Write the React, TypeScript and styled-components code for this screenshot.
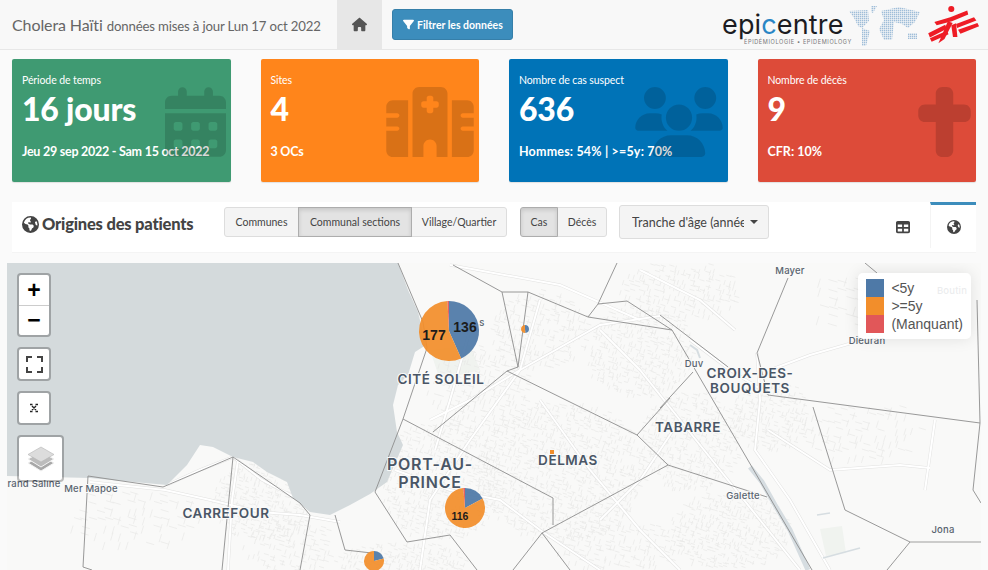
import styled, { createGlobalStyle } from "styled-components";
import type { ReactNode } from "react";
import {
  FaCalendarDays,
  FaCross,
  FaEarthAmericas,
  FaFilter,
  FaHospital,
  FaHouse,
  FaTable,
  FaUsers,
} from "react-icons/fa6";

const GlobalStyle = createGlobalStyle`
  html, body {
    margin: 0;
    height: 570px;
    overflow: hidden;
    background: #fafafa;
    font-family: "Lato", "Open Sans", sans-serif;
    color: #444;
  }
  * { box-sizing: border-box; }
`;

const Page = styled.div`
  display: flex;
  flex-direction: column;
  width: 988px;
  height: 570px;
  overflow: hidden;
`;

/* Top bar */
const NavBar = styled.header`
  display: flex;
  align-items: center;
  flex: none;
  height: 50px;
  background: #f8f8f8;
  border-bottom: 1px solid #e7e7e7;
`;

const Brand = styled.div`
  display: flex;
  align-items: baseline;
  gap: 4px;
  width: 337px;
  padding-left: 12px;
  color: #666;
  white-space: nowrap;
`;

const BrandTitle = styled.span`
  font-size: 16px;
  letter-spacing: -0.1px;
`;

const BrandDate = styled.span`
  font-size: 13.2px;
  letter-spacing: -0.16px;
`;

const HomeTab = styled.div`
  display: flex;
  align-items: center;
  justify-content: center;
  width: 45px;
  height: 49px;
  background: #e7e7e7;
  color: #555;
  font-size: 15px;
`;

const FilterButton = styled.button`
  display: flex;
  align-items: center;
  gap: 3px;
  height: 31px;
  width: 121px;
  margin-left: 10px;
  padding: 0 0 0 10px;
  border: 1px solid #367fa9;
  border-radius: 3px;
  background: #3c8dbc;
  color: #fff;
  font-family: inherit;
  font-size: 10.5px;
  font-weight: 700;
  white-space: nowrap;
`;

const Logos = styled.div`
  display: flex;
  align-items: center;
  margin-left: auto;
  height: 49px;
  padding-right: 8px;
`;

const EpicentreLogo = styled.div`
  display: flex;
  flex-direction: column;
  align-items: flex-start;
  width: 126px;
  margin-top: 8px;
`;

const EpicentreName = styled.span`
  font-family: "Inter", sans-serif;
  font-size: 27px;
  line-height: 25px;
  font-weight: 400;
  letter-spacing: 0.15px;
  color: #1c1c22;
  white-space: nowrap;
`;

const EpicentreBlue = styled.span`
  color: #2a86c5;
`;

const EpicentreTag = styled.span`
  margin: 2px 0 0 22px;
  font-family: "Inter", sans-serif;
  font-size: 5.6px;
  line-height: 7px;
  letter-spacing: 0.6px;
  color: #777;
  white-space: nowrap;
`;

/* Value boxes */
const ValueBoxRow = styled.section`
  display: grid;
  flex: none;
  grid-template-columns: repeat(4, 1fr);
  column-gap: 30px;
  padding: 9px 12px 0;
`;

const ValueBox = styled.div<{ $bg: string }>`
  position: relative;
  height: 123px;
  padding: 14px 10px 0;
  border-radius: 2px;
  background: ${(p) => p.$bg};
  color: #fff;
  box-shadow: 0 1px 1px rgba(0, 0, 0, 0.1);
  overflow: hidden;
`;

const ValueLabel = styled.div`
  font-size: 10.5px;
  line-height: 14px;
  letter-spacing: -0.1px;
`;

const ValueNumber = styled.div`
  margin-top: 2px;
  font-size: 32px;
  line-height: 40px;
  font-weight: 900;
  letter-spacing: -0.2px;
`;

const ValueNote = styled.div<{ $spacing: number }>`
  margin-top: 14px;
  font-size: 12.5px;
  line-height: 18px;
  font-weight: 700;
  letter-spacing: ${(p) => p.$spacing}px;
  white-space: nowrap;
`;

const ValueIcon = styled.div<{ $width: number }>`
  position: absolute;
  top: 28px;
  right: 5px;
  display: flex;
  color: rgba(0, 0, 0, 0.15);
  svg {
    width: ${(p) => p.$width}px;
    height: 70px;
  }
`;

/* Map section */
const MapHeader = styled.section`
  display: flex;
  flex: none;
  align-items: flex-start;
  height: 51px;
  margin: 20px 12px 0;
  background: #fff;
  border-bottom: 1px solid #f4f4f4;
`;

const MapTitle = styled.h2`
  display: flex;
  align-items: center;
  gap: 3px;
  width: 212px;
  margin: 12px 0 0;
  padding-left: 10px;
  font-size: 16.5px;
  font-weight: 900;
  letter-spacing: -0.2px;
  color: #444;
  white-space: nowrap;
`;

const ButtonGroup = styled.div<{ $gap: number }>`
  display: flex;
  margin: 5px ${(p) => p.$gap}px 0 0;
`;

const ToggleButton = styled.div<{ $active?: boolean; $width: number }>`
  display: flex;
  align-items: center;
  justify-content: center;
  width: ${(p) => p.$width}px;
  height: 30px;
  margin-left: -1px;
  border: 1px solid ${(p) => (p.$active ? "#adadad" : "#ddd")};
  background: ${(p) => (p.$active ? "#e3e3e3" : "#f4f4f4")};
  box-shadow: ${(p) => (p.$active ? "inset 0 2px 4px rgba(0,0,0,.13)" : "none")};
  color: #444;
  font-size: 10.5px;
  white-space: nowrap;
  position: relative;
  z-index: ${(p) => (p.$active ? 1 : 0)};
  &:first-child {
    margin-left: 0;
    border-radius: 3px 0 0 3px;
  }
  &:last-child {
    border-radius: 0 3px 3px 0;
  }
`;

const AgeDropdown = styled.div`
  display: flex;
  align-items: center;
  width: 150px;
  height: 34px;
  margin-top: 3px;
  padding-left: 12px;
  border: 1px solid #ddd;
  border-radius: 3px;
  background: #f4f4f4;
  color: #444;
  font-size: 12.5px;
  white-space: nowrap;
`;

const AgeText = styled.span`
  width: 112px;
  overflow: hidden;
`;

const Caret = styled.span`
  margin-left: 6px;
  border-top: 4px solid #444;
  border-left: 4px solid transparent;
  border-right: 4px solid transparent;
`;

const MapTabs = styled.div`
  display: flex;
  margin-left: auto;
`;

const MapTab = styled.div<{ $active?: boolean }>`
  display: flex;
  align-items: center;
  justify-content: center;
  width: 46px;
  height: 46px;
  padding: ${(p) => (p.$active ? "1px 0 0" : "1px 10px 0 0")};
  color: #444;
  font-size: 14px;
  border-top: 3px solid ${(p) => (p.$active ? "#3c8dbc" : "transparent")};
  border-left: 1px solid ${(p) => (p.$active ? "#f4f4f4" : "transparent")};
`;

const MapFrame = styled.div`
  position: relative;
  flex: 1;
  margin: 10px 7px 0;
  overflow: hidden;
  background: #f9f9f8;
`;

const MapSvg = styled.svg`
  display: block;
`;

const MapControls = styled.div`
  position: absolute;
  top: 10px;
  left: 10px;
  display: flex;
  flex-direction: column;
  align-items: flex-start;
  gap: 10px;
`;

const ControlBox = styled.div<{ $size?: number }>`
  display: flex;
  flex-direction: column;
  align-items: center;
  justify-content: center;
  width: ${(p) => p.$size ?? 34}px;
  min-height: ${(p) => p.$size ?? 34}px;
  border: 2px solid rgba(0, 0, 0, 0.25);
  border-radius: 4px;
  background: #fff;
  background-clip: padding-box;
`;

const ZoomButton = styled.div`
  display: flex;
  align-items: center;
  justify-content: center;
  width: 30px;
  height: 30px;
  font-family: "Liberation Sans", sans-serif;
  font-size: 23px;
  font-weight: 700;
  color: #000;
  & + & {
    border-top: 1px solid #ccc;
  }
`;

const Legend = styled.div`
  position: absolute;
  top: 10px;
  right: 10px;
  display: grid;
  grid-template-columns: 18px auto;
  column-gap: 7px;
  padding: 6px 8px;
  border-radius: 5px;
  background: rgba(255, 255, 255, 0.88);
  box-shadow: 0 0 15px rgba(0, 0, 0, 0.1);
  font-family: "Liberation Sans", Arial, sans-serif;
  font-size: 14px;
  line-height: 18px;
  color: #555;
`;

const Swatch = styled.i<{ $color: string }>`
  display: block;
  width: 18px;
  height: 18px;
  background: ${(p) => p.$color};
`;

const BLUE = "#4e79a7";
const ORANGE = "#f28e2b";
const RED = "#e15759";

/* Map geometry below is in page pixels, the viewBox takes care of the offset */
const COAST =
  "7,263 398,263 408,290 418,312 426,345 415,352 408,375 398,385 393,405 397,432 403,445 387,482 370,494 350,505 330,515 310,512 293,498 287,482 267,472 253,462 233,457 213,447 200,445 187,465 167,485 90,478 7,476";

const BOUNDARIES = [
  "453,265 502,292 528,292 588,317 672,330",
  "502,292 518,367 528,292",
  "518,367 507,371 433,432",
  "507,371 637,435 670,398",
  "637,435 668,465 542,533 513,570",
  "542,533 570,570",
  "553,525 553,498 403,419",
  "398,263 423,322 427,348 403,419 375,492 407,542 450,535 477,570",
  "617,263 598,304 588,317",
  "598,304 627,301 672,330",
  "672,330 812,570",
  "693,372 660,408",
  "668,465 767,497",
  "788,278 757,353 768,395 980,423",
  "813,407 845,510 910,542 887,570",
  "865,263 877,273",
  "977,300 980,423 973,490 981,503",
  "660,315 728,367",
  "88,476 163,487 233,457 300,503 310,515 300,570",
  "88,476 83,567",
  "233,457 222,570",
  "83,567 92,570",
  "335,515 345,550 372,553",
];

const MAIN_ROADS = [
  "167,485 200,470 233,457 262,480 300,500",
  "90,482 165,490 210,500 260,512 300,515 340,522",
  "238,460 232,500 228,570",
  "430,420 470,400 520,370 600,325 660,316",
  "395,470 450,490 500,500 540,530 600,570",
  "520,370 470,440 430,500 420,570",
  "600,330 640,370 680,420 720,470 760,520 800,570",
  "757,353 760,400 755,450 790,500 830,570",
  "768,430 830,470 900,465 930,468",
  "880,335 810,355 770,370",
  "935,420 925,490",
  "450,265 560,285 640,320",
  "640,270 700,300 735,330",
  "690,340 730,370 770,395",
  "540,400 590,470 640,530 680,570",
  "470,330 450,400 435,450",
  "540,300 520,370",
  "680,420 640,480 600,520",
];

/* Deterministic scribble for the dense street grid in the built up areas */
function streetGrid(cx: number, cy: number, w: number, h: number, step: number, seed: number) {
  let d = "";
  let s = seed;
  const next = () => {
    s = (s * 9301 + 49297) % 233280;
    return s / 233280;
  };
  for (let x = cx - w / 2; x < cx + w / 2; x += step) {
    for (let y = cy - h / 2; y < cy + h / 2; y += step) {
      const dx = (x - cx) / (w / 2);
      const dy = (y - cy) / (h / 2);
      if (dx * dx + dy * dy > 1 || next() < 0.2) continue;
      const jx = next() * 3 - 1.5;
      const jy = next() * 3 - 1.5;
      d +=
        next() > 0.5
          ? `M${(x + jx).toFixed(1)} ${(y + jy).toFixed(1)}l${step} ${(step * 0.3).toFixed(1)}`
          : `M${(x + jx).toFixed(1)} ${(y + jy).toFixed(1)}l${(-step * 0.3).toFixed(1)} ${step}`;
    }
  }
  return d;
}

const STREET_AREAS: [number, number, number, number, number, number][] = [
  [262, 500, 100, 80, 4, 11],
  [135, 515, 140, 60, 8, 23],
  [440, 480, 120, 120, 4, 37],
  [560, 470, 170, 140, 4, 41],
  [480, 390, 100, 90, 5, 53],
  [540, 330, 100, 80, 5, 61],
  [640, 350, 110, 90, 4, 71],
  [690, 440, 100, 100, 4, 83],
  [770, 415, 80, 70, 4, 97],
  [860, 430, 120, 60, 7, 101],
  [730, 530, 120, 80, 4, 113],
  [680, 290, 120, 60, 5, 127],
  [400, 560, 130, 40, 4, 131],
  [290, 545, 90, 60, 5, 137],
  [620, 545, 130, 50, 5, 149],
  [840, 300, 60, 60, 9, 157],
];

const STREETS = STREET_AREAS.map((a) => streetGrid(...a)).join("");

const GREEN_AREAS = ["820,529 842,526 846,553 826,556", "430,350 470,345 480,370 440,380"];

const RIVERS = [
  { points: "750,467 762,482 775,505 790,530 808,570", width: 5 },
  { points: "690,345 697,350 700,358", width: 2 },
  { points: "817,515 830,513", width: 1.5 },
  { points: "823,558 860,548", width: 1.5 },
];

const PLACES = [
  { x: 441, y: 384, size: 13.5, spacing: 0.6, text: "CITÉ SOLEIL" },
  { x: 430, y: 470, size: 16, spacing: 0.75, text: "PORT-AU-" },
  { x: 430, y: 488, size: 16, spacing: 0.75, text: "PRINCE" },
  { x: 568, y: 465, size: 13.5, spacing: 0.55, text: "DELMAS" },
  { x: 688, y: 432, size: 13.5, spacing: 0.55, text: "TABARRE" },
  { x: 750, y: 378, size: 13.5, spacing: 0.55, text: "CROIX-DES-" },
  { x: 750, y: 393, size: 13.5, spacing: 0.55, text: "BOUQUETS" },
  { x: 226, y: 518, size: 13.5, spacing: 0.55, text: "CARREFOUR" },
];

const TOWNS = [
  { x: 91, y: 492, text: "Mer Mapoe" },
  { x: 34, y: 487, text: "rand Saline" },
  { x: 790, y: 274, text: "Mayer" },
  { x: 867, y: 344, text: "Dieuran" },
  { x: 694, y: 367, text: "Duv" },
  { x: 743, y: 499, text: "Galette" },
  { x: 943, y: 533, text: "Jona" },
  { x: 952, y: 294, text: "Boutin" },
  { x: 482, y: 326, text: "s" },
];

type Slice = { color: string; from: number; to: number };

function slicePath(cx: number, cy: number, r: number, from: number, to: number) {
  const a = ((from - 90) * Math.PI) / 180;
  const b = ((to - 90) * Math.PI) / 180;
  const large = to - from > 180 ? 1 : 0;
  return `M${cx} ${cy}L${cx + r * Math.cos(a)} ${cy + r * Math.sin(a)}A${r} ${r} 0 ${large} 1 ${
    cx + r * Math.cos(b)
  } ${cy + r * Math.sin(b)}Z`;
}

const PIES: { cx: number; cy: number; r: number; slices: Slice[] }[] = [
  {
    cx: 449,
    cy: 331,
    r: 30,
    slices: [
      { color: BLUE, from: 0, to: 156 },
      { color: ORANGE, from: 156, to: 357 },
      { color: RED, from: 357, to: 360 },
    ],
  },
  {
    cx: 525,
    cy: 329,
    r: 4,
    slices: [
      { color: BLUE, from: 0, to: 175 },
      { color: ORANGE, from: 175, to: 360 },
    ],
  },
  {
    cx: 465,
    cy: 508,
    r: 20,
    slices: [
      { color: BLUE, from: 0, to: 62 },
      { color: ORANGE, from: 62, to: 355 },
      { color: RED, from: 355, to: 360 },
    ],
  },
  {
    cx: 374,
    cy: 561,
    r: 10,
    slices: [
      { color: BLUE, from: 0, to: 75 },
      { color: ORANGE, from: 75, to: 360 },
    ],
  },
];

const PIE_LABELS = [
  { x: 465, y: 332, size: 14, text: "136" },
  { x: 434, y: 340, size: 14, text: "177" },
  { x: 460, y: 520, size: 10.5, text: "116" },
];

function CityMap() {
  return (
    <MapSvg width={974} height={307} viewBox="7 263 974 307">
      <rect x={7} y={263} width={974} height={307} fill="#f9f9f8" />
      {GREEN_AREAS.map((p) => (
        <polygon key={p} points={p} fill="#f0f3ef" />
      ))}
      <path d={STREETS} fill="none" stroke="#e8e8e7" strokeWidth={0.7} />
      {MAIN_ROADS.map((p) => (
        <polyline key={p} points={p} fill="none" stroke="#e2e2e1" strokeWidth={3} />
      ))}
      {MAIN_ROADS.map((p) => (
        <polyline key={`w${p}`} points={p} fill="none" stroke="#fff" strokeWidth={2} />
      ))}
      {RIVERS.map((r) => (
        <polyline key={r.points} points={r.points} fill="none" stroke="#d6dde1" strokeWidth={r.width} />
      ))}
      <polygon points={COAST} fill="#d4dadc" />
      {BOUNDARIES.map((p) => (
        <polyline key={p} points={p} fill="none" stroke="#8d8d8d" strokeWidth={0.9} />
      ))}
      <polyline points="910,542 981,542" fill="none" stroke="#bdbdbd" strokeWidth={1.5} />
      {PLACES.map((p) => (
        <text
          key={p.text}
          x={p.x}
          y={p.y}
          textAnchor="middle"
          fontFamily="Inter, sans-serif"
          fontWeight={600}
          fontSize={p.size}
          letterSpacing={p.spacing}
          fill="#4a5666"
          stroke="#f9f9f8"
          strokeWidth={2}
          paintOrder="stroke"
        >
          {p.text}
        </text>
      ))}
      {TOWNS.map((t) => (
        <text
          key={t.text}
          x={t.x}
          y={t.y}
          textAnchor="middle"
          fontFamily="Inter, sans-serif"
          fontWeight={500}
          fontSize={9.5}
          letterSpacing={0.2}
          fill="#58636f"
          stroke="#f9f9f8"
          strokeWidth={2}
          paintOrder="stroke"
        >
          {t.text}
        </text>
      ))}
      <rect x={550} y={450} width={4} height={4} fill={ORANGE} />
      {PIES.map((pie) =>
        pie.slices.map((s) => (
          <path
            key={`${pie.cx}${s.color}`}
            d={slicePath(pie.cx, pie.cy, pie.r, s.from, s.to)}
            fill={s.color}
            fillOpacity={0.93}
          />
        ))
      )}
      {PIE_LABELS.map((l) => (
        <text
          key={l.text}
          x={l.x}
          y={l.y}
          textAnchor="middle"
          fontFamily="Liberation Sans, sans-serif"
          fontWeight={700}
          fontSize={l.size}
          fill="#1c1c1c"
        >
          {l.text}
        </text>
      ))}
    </MapSvg>
  );
}

function WorldDots() {
  return (
    <svg width={80} height={46} viewBox="0 0 80 46">
      <defs>
        <pattern id="dots" width={2} height={2} patternUnits="userSpaceOnUse">
          <rect width={1.4} height={1.4} fill="#9fbdd8" />
        </pattern>
      </defs>
      <g fill="url(#dots)">
        <polygon points="1,9 20,8 21,19 14,26 10,24 6,16" />
        <polygon points="14,26 22,29 18,44 14,44" />
        <polygon points="23,4 29,4 25,11 23,10" />
        <polygon points="33,9 51,5 72,10 67,20 60,26 54,22 46,20 44,38 36,38 31,27 36,18" />
        <polygon points="60,31 69,31 69,37 60,37" />
      </g>
    </svg>
  );
}

function MsfLogo() {
  return (
    <svg width={52} height={39} viewBox="30 12 152 115">
      <g fill="#ee1c25">
        <circle cx={98} cy={24} r={9} />
        <polygon points="48,62 95,48 145,28 148,40 100,60 55,72" />
        <polygon points="112,68 165,48 172,58 115,80" />
        <polygon points="118,85 175,65 180,75 125,97" />
        <polygon points="30,95 80,70 85,82 35,108" />
        <polygon points="35,110 85,88 90,98 40,120" />
        <polygon points="60,125 78,112 102,65 88,60" />
        <polygon points="98,72 112,66 116,106 103,106" />
      </g>
    </svg>
  );
}

function FullscreenIcon() {
  return (
    <svg width={17} height={17} viewBox="0 0 17 17" fill="none" stroke="#444" strokeWidth={2}>
      <path d="M1 6V1h5M11 1h5v5M16 11v5h-5M6 16H1v-5" />
    </svg>
  );
}

function ResetIcon() {
  return (
    <svg width={10} height={10} viewBox="0 0 10 10" stroke="#222" strokeWidth={1.4} fill="none">
      <path d="M1 1.5h2.5M6.5 1.5H9M1 8.5h2.5M6.5 8.5H9M3 3l4 4M7 3L3 7" />
    </svg>
  );
}

function LayersIcon() {
  return (
    <svg width={28} height={26} viewBox="0 0 28 26">
      <polygon points="14,10 27,17 14,25 1,17" fill="#a8a8a8" stroke="#f4f4f4" />
      <polygon points="14,6 27,13 14,21 1,13" fill="#bcbcbc" stroke="#f4f4f4" />
      <polygon points="14,1 27,8.5 14,16 1,8.5" fill="#dcdcdc" stroke="#b5b5b5" strokeWidth={0.6} />
    </svg>
  );
}

type Box = {
  bg: string;
  label: string;
  value: string;
  note: string;
  noteSpacing: number;
  icon: ReactNode;
  iconWidth: number;
};

const BOXES: Box[] = [
  {
    bg: "#3f9a72",
    label: "Période de temps",
    value: "16 jours",
    note: "Jeu 29 sep 2022 - Sam 15 oct 2022",
    noteSpacing: -0.25,
    icon: <FaCalendarDays />,
    iconWidth: 61,
  },
  {
    bg: "#ff851b",
    label: "Sites",
    value: "4",
    note: "3 OCs",
    noteSpacing: -0.25,
    icon: <FaHospital />,
    iconWidth: 88,
  },
  {
    bg: "#0073b7",
    label: "Nombre de cas suspect",
    value: "636",
    note: "Hommes: 54% | >=5y: 70%",
    noteSpacing: 0.18,
    icon: <FaUsers />,
    iconWidth: 88,
  },
  {
    bg: "#dd4b39",
    label: "Nombre de décès",
    value: "9",
    note: "CFR: 10%",
    noteSpacing: 0,
    icon: <FaCross />,
    iconWidth: 53,
  },
];

export default function App() {
  return (
    <Page>
      <GlobalStyle />
      <NavBar>
        <Brand>
          <BrandTitle>Cholera Haïti</BrandTitle>
          <BrandDate>données mises à jour Lun 17 oct 2022</BrandDate>
        </Brand>
        <HomeTab>
          <FaHouse />
        </HomeTab>
        <FilterButton>
          <FaFilter size={11} /> Filtrer les données
        </FilterButton>
        <Logos>
          <EpicentreLogo>
            <EpicentreName>
              epi<EpicentreBlue>c</EpicentreBlue>entre
            </EpicentreName>
            <EpicentreTag>ÉPIDÉMIOLOGIE • EPIDEMIOLOGY</EpicentreTag>
          </EpicentreLogo>
          <WorldDots />
          <MsfLogo />
        </Logos>
      </NavBar>

      <ValueBoxRow>
        {BOXES.map((b) => (
          <ValueBox key={b.label} $bg={b.bg}>
            <ValueLabel>{b.label}</ValueLabel>
            <ValueNumber>{b.value}</ValueNumber>
            <ValueNote $spacing={b.noteSpacing}>{b.note}</ValueNote>
            <ValueIcon $width={b.iconWidth}>{b.icon}</ValueIcon>
          </ValueBox>
        ))}
      </ValueBoxRow>

      <MapHeader>
        <MapTitle>
          <FaEarthAmericas size={17} /> Origines des patients
        </MapTitle>
        <ButtonGroup $gap={13}>
          <ToggleButton $width={75}>Communes</ToggleButton>
          <ToggleButton $width={114} $active>
            Communal sections
          </ToggleButton>
          <ToggleButton $width={96}>Village/Quartier</ToggleButton>
        </ButtonGroup>
        <ButtonGroup $gap={12}>
          <ToggleButton $width={38} $active>
            Cas
          </ToggleButton>
          <ToggleButton $width={50}>Décès</ToggleButton>
        </ButtonGroup>
        <AgeDropdown>
          <AgeText>Tranche d'âge (année</AgeText>
          <Caret />
        </AgeDropdown>
        <MapTabs>
          <MapTab>
            <FaTable />
          </MapTab>
          <MapTab $active>
            <FaEarthAmericas />
          </MapTab>
        </MapTabs>
      </MapHeader>

      <MapFrame>
        <CityMap />
        <MapControls>
          <ControlBox>
            <ZoomButton>+</ZoomButton>
            <ZoomButton>−</ZoomButton>
          </ControlBox>
          <ControlBox>
            <FullscreenIcon />
          </ControlBox>
          <ControlBox>
            <ResetIcon />
          </ControlBox>
          <ControlBox $size={47}>
            <LayersIcon />
          </ControlBox>
        </MapControls>
        <Legend>
          <Swatch $color={BLUE} />
          <span>&lt;5y</span>
          <Swatch $color={ORANGE} />
          <span>&gt;=5y</span>
          <Swatch $color={RED} />
          <span>(Manquant)</span>
        </Legend>
      </MapFrame>
    </Page>
  );
}
